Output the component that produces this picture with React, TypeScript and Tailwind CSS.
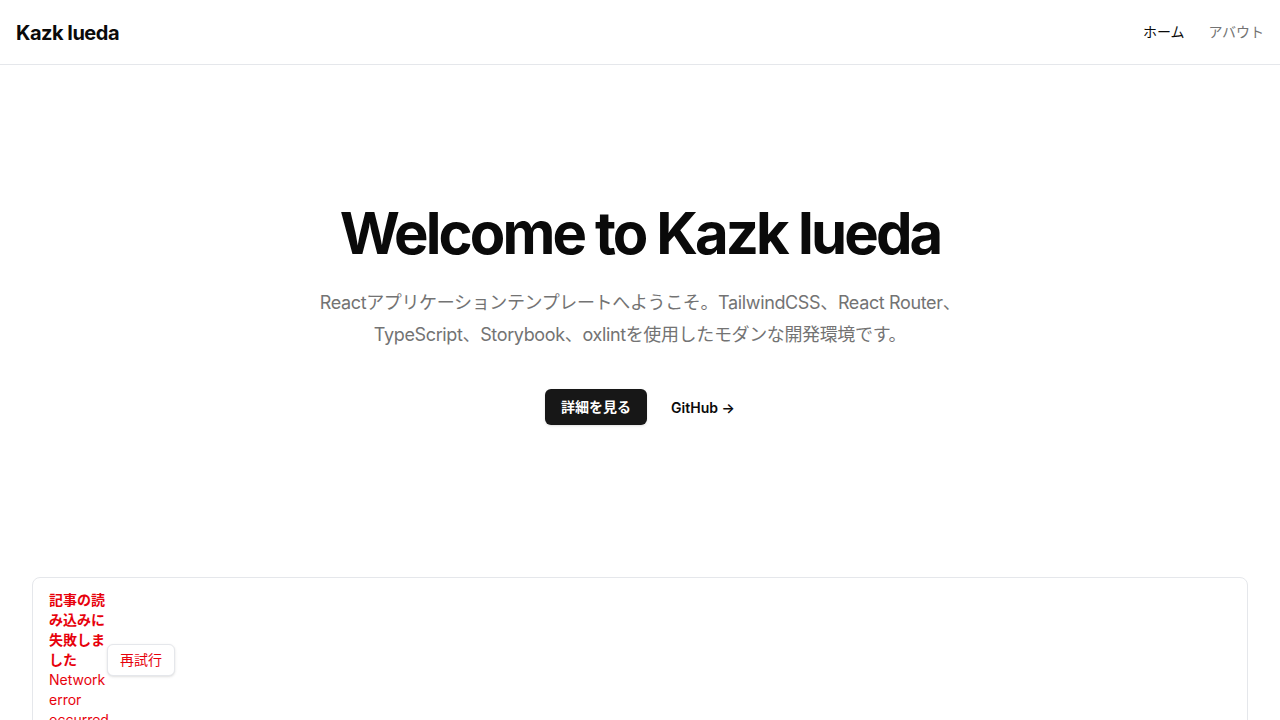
const font = "font-['Inter','Noto_Sans_CJK_JP',sans-serif]"

function Header() {
  return (
    <header className="h-[65px] border-b border-gray-200 px-4 flex items-center justify-between">
      <a className="pt-0.5 text-xl font-bold text-neutral-950 tracking-tight">Kazk Iueda</a>
      <nav className="flex items-center gap-6 text-sm">
        <a className="text-neutral-950">ホーム</a>
        <a className="text-neutral-500">アバウト</a>
      </nav>
    </header>
  )
}

function Hero() {
  return (
    <section className="pt-[138px] pb-[152px] flex flex-col items-center text-center">
      <h1 className="text-[58px] leading-[60px] font-bold tracking-tighter text-neutral-950">Welcome to Kazk Iueda</h1>
      <p className="mt-6 max-w-[672px] text-lg leading-8 tracking-[-0.02em] text-neutral-500">
        Reactアプリケーションテンプレートへようこそ。TailwindCSS、React Router、TypeScript、Storybook、oxlintを使用したモダンな開発環境です。
      </p>
      <div className="mt-[38px] flex items-center gap-6">
        <button className="h-9 px-4 rounded-md bg-neutral-900 text-white text-sm font-semibold shadow-sm">詳細を見る</button>
        <a className="pt-0.5 text-sm font-semibold text-neutral-950">GitHub →</a>
      </div>
    </section>
  )
}

function ArticleError() {
  return (
    <div className="mx-8 border border-gray-200 rounded-lg px-4 py-3">
      <div className="flex items-center">
        <div className="w-[58px] text-sm leading-5 text-red-600">
          <p className="font-semibold">記事の読み込みに失敗しました</p>
          <p>Network error occurred</p>
        </div>
        <button className="h-8 px-3 rounded-md border border-gray-200 text-sm text-red-600 shadow-sm bg-white">再試行</button>
      </div>
    </div>
  )
}

export default function App() {
  return (
    <div className={`min-h-screen bg-white ${font}`}>
      <Header />
      <Hero />
      <ArticleError />
    </div>
  )
}
